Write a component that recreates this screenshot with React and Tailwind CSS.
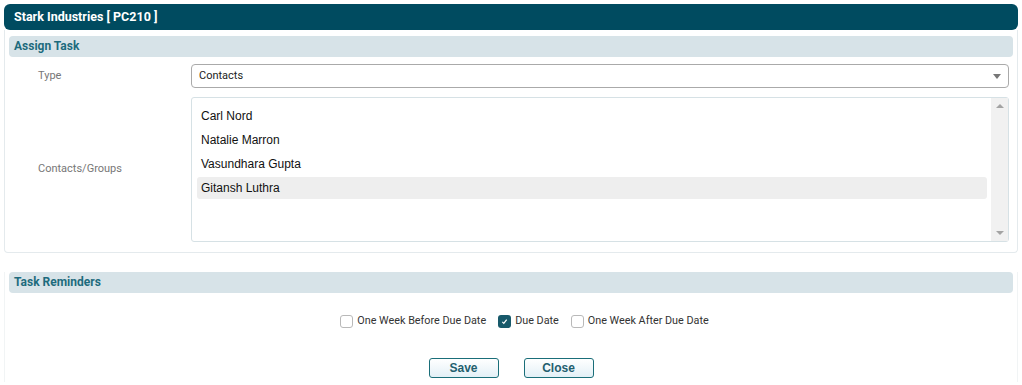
const contacts = [
  { id: 1, name: 'Carl Nord' },
  { id: 2, name: 'Natalie Marron' },
  { id: 3, name: 'Vasundhara Gupta' },
  { id: 4, name: 'Gitansh Luthra', active: true },
];

const reminders = [
  { id: 'before', label: 'One Week Before Due Date', checked: false },
  { id: 'due', label: 'Due Date', checked: true },
  { id: 'after', label: 'One Week After Due Date', checked: false },
];

function SectionTitle({ children }) {
  return (
    <div className="h-[21px] rounded-[4px] bg-[#d7e3e8] pl-[5px] text-[12px] font-bold leading-[21px] text-[#1d6b7d]">
      {children}
    </div>
  );
}

function Checkbox({ checked, label }) {
  return (
    <label className="flex items-center gap-[4px]">
      {checked ? (
        <span className="flex h-[13px] w-[13px] items-center justify-center rounded-[3px] bg-[#17596a]">
          <svg width="7" height="7" viewBox="0 0 8 8">
            <path d="M1.5 4.5 L3.2 6.2 L6.5 1.8" fill="none" stroke="#fff" strokeWidth="1.4" />
          </svg>
        </span>
      ) : (
        <span className="h-[13px] w-[13px] rounded-[3px] border border-[#b9b9b9] bg-white" />
      )}
      <span className="text-[10.8px] text-[#333]">{label}</span>
    </label>
  );
}

function Button({ children }) {
  return (
    <button className="h-[20px] w-[70px] rounded-[3px] border border-[#1a6e79] bg-gradient-to-b from-white to-[#e3f0f6] font-['Liberation_Sans',Arial,sans-serif] text-[12px] font-bold text-[#245f6f]">
      {children}
    </button>
  );
}

export default function App() {
  return (
    <div className="h-[385px] w-[1022px] bg-white px-[4px] pt-[4px] font-['Roboto',sans-serif]">
      <div className="h-[26px] rounded-[6px] bg-[#004b60] pl-[10px] text-[12.5px] font-bold leading-[26px] text-white">
        Stark Industries [ PC210 ]
      </div>

      <div className="rounded-b-[4px] border border-t-0 border-[#e4eaed] px-[4px] pb-[10px] pt-[6px]">
        <SectionTitle>Assign Task</SectionTitle>

        <div className="mt-[7px] grid grid-cols-[182px_1fr] pr-[4px]">
          <div className="flex items-center pl-[29px] text-[11px] text-[#777]">Type</div>
          <div className="flex h-[24px] items-center justify-between rounded-[4px] border border-[#aaa] pl-[7px] pr-[7px] text-[11px] text-[#222]">
            <span>Contacts</span>
            <svg width="8" height="5" viewBox="0 0 8 5">
              <path d="M0 0 H8 L4 5 Z" fill="#777" />
            </svg>
          </div>

          <div className="mt-[9px] flex items-center pl-[29px] text-[11px] text-[#777]">Contacts/Groups</div>
          <div className="mt-[9px] flex h-[145px] rounded-[3px] border border-[#d6e1e5]">
            <div className="flex-1 pl-[5px] pr-[4px] pt-[7px] font-['Liberation_Sans',Arial,sans-serif] text-[12px] text-[#111]">
              {contacts.map((c) => (
                <div
                  key={c.id}
                  className={`mb-[2px] flex h-[22px] items-center rounded-[3px] pl-[4px] ${c.active ? 'bg-[#eeeeee]' : ''}`}
                >
                  {c.name}
                </div>
              ))}
            </div>
            <div className="flex w-[17px] flex-col items-center justify-between bg-[#f1f1f1] py-[6px]">
              <svg width="8" height="4" viewBox="0 0 8 4">
                <path d="M0 4 H8 L4 0 Z" fill="#a3a3a3" />
              </svg>
              <svg width="8" height="4" viewBox="0 0 8 4">
                <path d="M0 0 H8 L4 4 Z" fill="#a3a3a3" />
              </svg>
            </div>
          </div>
        </div>
      </div>

      <div className="mt-[19px] h-[110px] border-x border-[#f1f4f5] px-[4px]">
        <SectionTitle>Task Reminders</SectionTitle>

        <div className="mt-[20px] flex justify-center gap-[12px] pl-[27px]">
          {reminders.map((r) => (
            <Checkbox key={r.id} checked={r.checked} label={r.label} />
          ))}
        </div>

        <div className="mt-[29px] flex justify-center gap-[25px]">
          <Button>Save</Button>
          <Button>Close</Button>
        </div>
      </div>
    </div>
  );
}
